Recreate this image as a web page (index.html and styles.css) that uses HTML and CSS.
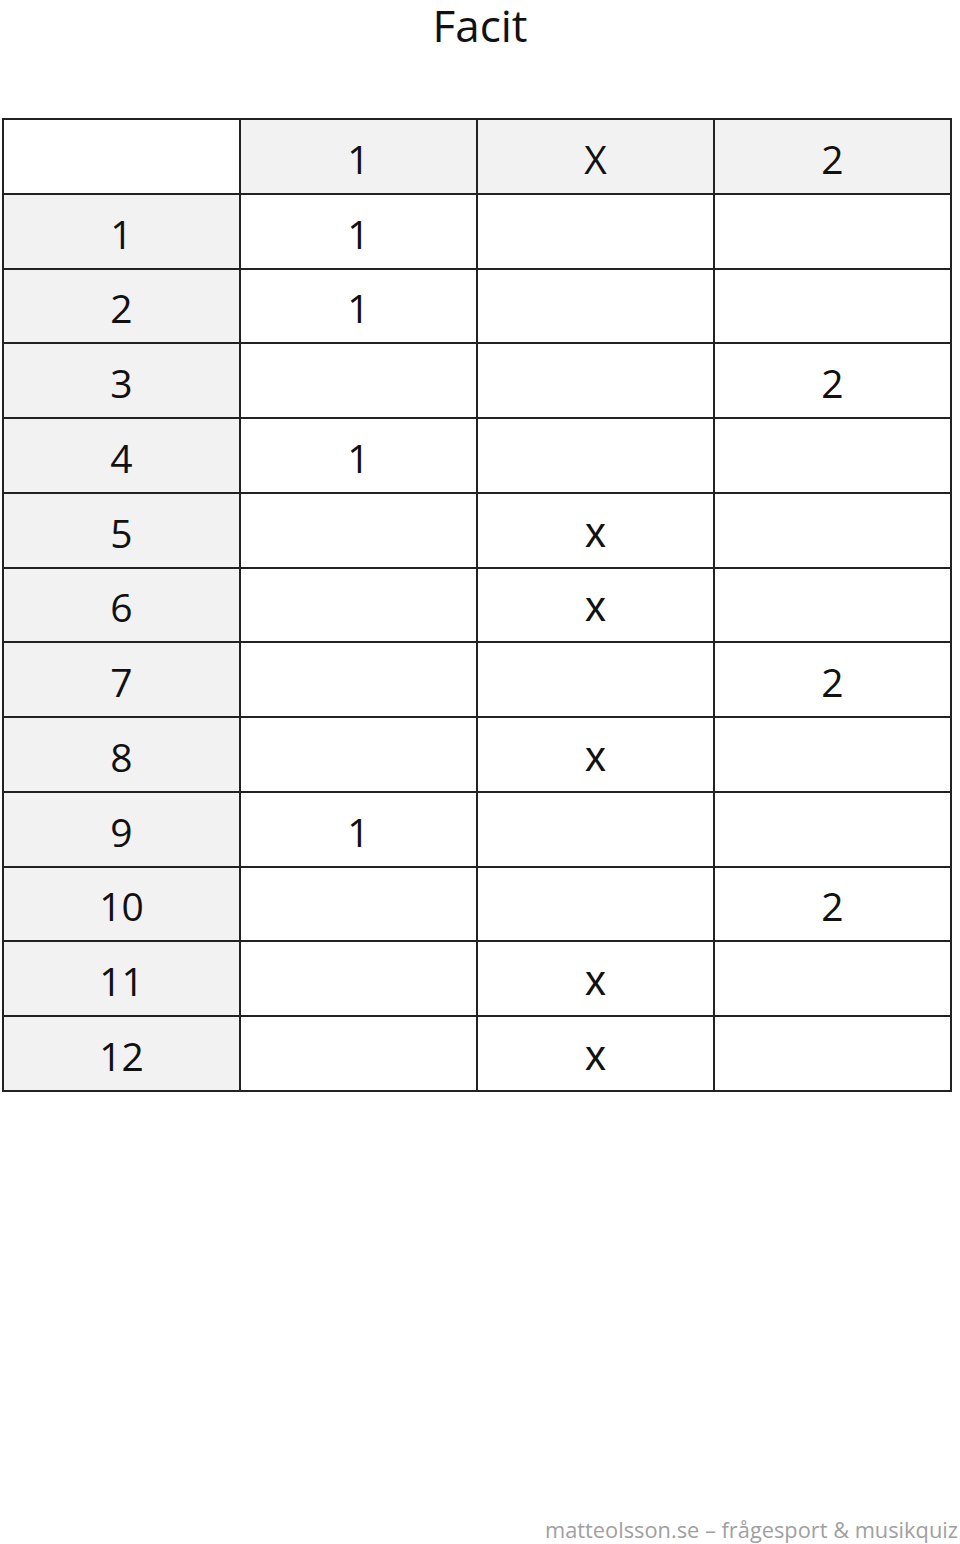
FILE: index.html
```html
<!DOCTYPE html>
<html lang="sv">
<head>
<meta charset="utf-8">
<title>Facit</title>
<link rel="stylesheet" href="styles.css">
</head>
<body>
<div class="page">
  <h1 class="title">Facit</h1>
  <table class="facit">
    <colgroup><col><col><col><col></colgroup>
    <thead>
      <tr><th class="corner"></th><th>1</th><th>X</th><th>2</th></tr>
    </thead>
    <tbody>
      <tr><th>1</th><td>1</td><td></td><td></td></tr>
      <tr><th>2</th><td>1</td><td></td><td></td></tr>
      <tr><th>3</th><td></td><td></td><td>2</td></tr>
      <tr><th>4</th><td>1</td><td></td><td></td></tr>
      <tr><th>5</th><td></td><td class="x">x</td><td></td></tr>
      <tr><th>6</th><td></td><td class="x">x</td><td></td></tr>
      <tr><th>7</th><td></td><td></td><td>2</td></tr>
      <tr><th>8</th><td></td><td class="x">x</td><td></td></tr>
      <tr><th>9</th><td>1</td><td></td><td></td></tr>
      <tr><th>10</th><td></td><td></td><td>2</td></tr>
      <tr><th>11</th><td></td><td class="x">x</td><td></td></tr>
      <tr><th>12</th><td></td><td class="x">x</td><td></td></tr>
    </tbody>
  </table>
  <footer class="footer">matteolsson.se – frågesport &amp; musikquiz</footer>
</div>
</body>
</html>
```
FILE: styles.css
```css
html, body {
  margin: 0;
  padding: 0;
  background: #ffffff;
}

.page {
  width: 960px;
  min-height: 1544px;
  box-sizing: border-box;
  display: flex;
  flex-direction: column;
  font-family: "Open Sans", "DejaVu Sans", sans-serif;
  color: #111111;
}

.title {
  margin: 0;
  height: 118px;
  text-align: center;
  font-weight: 400;
  font-size: 44px;
  line-height: 50px;
  color: #111111;
}

.facit {
  margin-left: 2px;
  width: 950px;
  border-collapse: collapse;
  table-layout: fixed;
}

.facit tr {
  height: 74.75px;
}

.facit th,
.facit td {
  border: 2px solid #222222;
  padding: 5px 0 0 0;
  text-align: center;
  vertical-align: middle;
  font-size: 39px;
  font-weight: 400;
  line-height: 40px;
  color: #111111;
}

.facit thead th {
  background: #f2f2f2;
}

.facit thead th.corner {
  background: #ffffff;
}

.facit tbody th {
  background: #f2f2f2;
}

.facit td {
  background: #ffffff;
}

.facit td.x {
  font-family: "Liberation Sans", Arial, sans-serif;
  font-size: 42px;
}

.footer {
  margin-top: auto;
  text-align: right;
  font-size: 21.8px;
  line-height: 28px;
  color: #a0a0a0;
  padding-right: 2px;
}
```
